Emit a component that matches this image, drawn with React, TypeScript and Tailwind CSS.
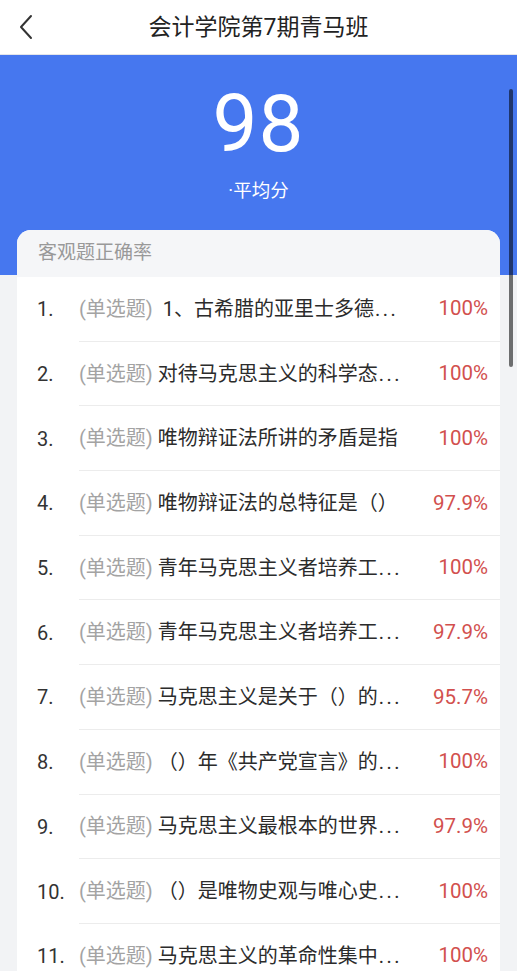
import React from "react";

const rows: { n: string; t: string; p: string }[] = [
  { n: "1.", t: " 1、古希腊的亚里士多德...", p: "100%" },
  { n: "2.", t: "对待马克思主义的科学态...", p: "100%" },
  { n: "3.", t: "唯物辩证法所讲的矛盾是指", p: "100%" },
  { n: "4.", t: "唯物辩证法的总特征是（）", p: "97.9%" },
  { n: "5.", t: "青年马克思主义者培养工...", p: "100%" },
  { n: "6.", t: "青年马克思主义者培养工...", p: "97.9%" },
  { n: "7.", t: "马克思主义是关于（）的...", p: "95.7%" },
  { n: "8.", t: "（）年《共产党宣言》的...", p: "100%" },
  { n: "9.", t: "马克思主义最根本的世界...", p: "97.9%" },
  { n: "10.", t: "（）是唯物史观与唯心史...", p: "100%" },
  { n: "11.", t: "马克思主义的革命性集中...", p: "100%" },
];

const font = { fontFamily: 'Roboto, "Noto Sans CJK SC", sans-serif' };

function Title({ t }: { t: string }) {
  if (t.endsWith("...")) {
    return (
      <>
        {t.slice(0, -3)}
        <span className="ml-[1px] tracking-[2.5px]">...</span>
      </>
    );
  }
  return <>{t}</>;
}

export default function App() {
  return (
    <div className="w-[527px] h-[971px] overflow-hidden bg-white flex" style={font}>
      <div className="w-[517px] h-full relative bg-[#f2f3f5] overflow-hidden flex flex-col">
        <div className="h-[55px] shrink-0 bg-white border-b border-[#e3e5ea] flex items-center justify-center relative">
          <svg className="absolute left-[17px] top-[14px]" width="18" height="26" viewBox="0 0 18 26">
            <polyline points="14,2 4,13 14,24" fill="none" stroke="#333" strokeWidth="2" strokeLinecap="round" strokeLinejoin="round" />
          </svg>
          <span className="text-[23px] text-[#222] leading-none">会计学院第7期青马班</span>
        </div>
        <div className="h-[220px] shrink-0 bg-[#4677ef] flex flex-col items-center text-white">
          <div className="mt-[29px] text-[80px] leading-none font-normal tracking-[1px]">98</div>
          <div className="mt-[18px] text-[18.5px] leading-none">·平均分</div>
        </div>
        <div className="mx-[17px] -mt-[45px] bg-white rounded-t-[14px] overflow-hidden">
          <div className="h-[47px] bg-[#f5f6f8] pl-[21px] flex items-center text-[19px] text-[#999]">客观题正确率</div>
          {rows.map((r) => (
            <div key={r.n} className="h-[64.7px] flex items-stretch">
              <div className="w-[62px] pl-[20px] flex items-center text-[20px] text-[#333]">{r.n}</div>
              <div className="flex-1 flex items-center border-b border-[#ececec] pr-[12px]">
                <span className="text-[20px] text-[#a3a3a3] whitespace-nowrap">(单选题)</span>
                <span className="ml-[5px] text-[20px] text-[#2b2b2b] whitespace-pre">
                  <Title t={r.t} />
                </span>
                <span className="ml-auto text-[20.5px] text-[#d2504e]">{r.p}</span>
              </div>
            </div>
          ))}
        </div>
        <div className="absolute right-[4px] top-[89px] w-[4px] h-[278px] rounded-full bg-black/55" />
      </div>
      <div className="flex-1 bg-white" />
    </div>
  );
}
